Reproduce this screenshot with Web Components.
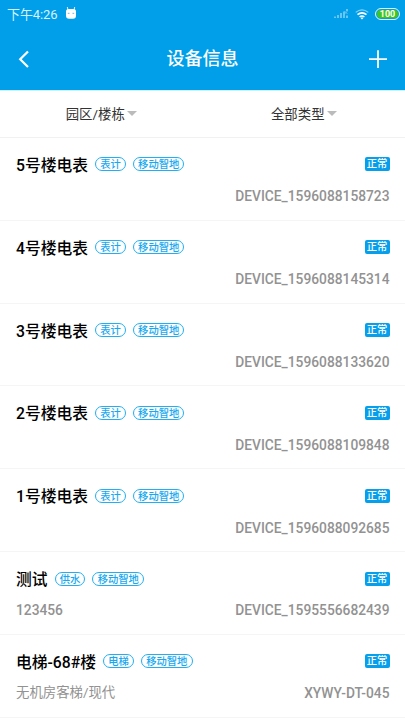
<!DOCTYPE html>
<html lang="zh-CN">
<head>
<meta charset="utf-8">
<title>设备信息</title>
<style>
html,body{margin:0;height:100%;overflow:hidden;background:#fff}
body{font-family:Roboto,"Noto Sans CJK SC",sans-serif;color:#111}
</style>
</head>
<body>
<device-app></device-app>
<script>
const define = (name, html, setup) => {
  customElements.define(name, class extends HTMLElement {
    constructor() {
      super();
      this.attachShadow({mode: 'open'}).innerHTML = html;
    }
    connectedCallback() { if (setup) setup(this, this.shadowRoot); }
  });
};

define('status-bar', `
<style>
:host{display:flex;align-items:center;height:28px;padding:0 6px 0 7px;color:#d9f2ff;font-size:13px;line-height:28px;box-sizing:border-box}
.time{letter-spacing:-.1px;padding-top:1px}
.face{margin-left:8px;margin-top:-3px}
.signal{margin-left:auto;margin-top:-1px}
.wifi{margin-left:6px}
.battery{box-sizing:border-box;width:25px;height:12px;margin-left:6px;margin-right:-1px;border:1px solid #e4fbe9;border-radius:6px;padding:1px;display:flex}
.battery span{flex:1;background:#3fc51c;border-radius:4px;color:#fff;font-size:9px;font-weight:700;line-height:8.5px;text-align:center}
svg{display:block}
</style>
<span class="time">下午4:26</span>
<svg class="face" width="12" height="14" viewBox="0 0 12 14"><path d="M3 4 2.3 1M9 4 9.7 1" stroke="#d9f2ff" stroke-width="1"/><path d="M1 5.5Q1 3 3.5 3h5Q11 3 11 5.5v4.2q0 3-3 3H4q-3 0-3-3Z" fill="#fff"/><path d="M2.8 7.3h1.7M7.5 7.3h1.7" stroke="#5fb9e6" stroke-width="1"/></svg>
<svg class="signal" width="15" height="11" viewBox="0 0 15 11"><path d="M1 10V8.5M4 10V7M7 10V5M10 10V3.5M13 10V7.5M13 3V1" stroke="#72caf6" stroke-width="1.8"/><path d="m10.5 3 3 3m0-3-3 3" stroke="#72caf6" stroke-width=".8"/></svg>
<svg class="wifi" width="14" height="11" viewBox="0 0 14 11" fill="none"><path d="M.7 3.4Q7-1.7 13.3 3.4" stroke="#82d3fa" stroke-width="1.2"/><path d="M2.5 5.7Q7 2 11.5 5.7M4.6 8Q7 6 9.4 8" stroke="#fff" stroke-width="1.6"/><path d="m5.6 9 1.4-.8 1.4.8L7 10.5Z" fill="#fff"/></svg>
<div class="battery"><span>100</span></div>`);

define('nav-bar', `
<style>
:host{display:grid;grid-template-columns:1fr auto 1fr;align-items:center;height:62px;padding:0 18px;box-sizing:border-box;color:#fff}
h1{margin:0;font-size:18px;line-height:24px;font-weight:500}
svg{display:block}
.add{justify-self:end}
</style>
<svg width="12" height="18" viewBox="0 0 12 18"><path d="M10 1.5 2.2 9.3 10 17" fill="none" stroke="#fff" stroke-width="2.2"/></svg>
<h1><slot></slot></h1>
<svg class="add" width="18" height="18" viewBox="0 0 18 18"><path d="M9 .3v17.6M0 9.2h18" stroke="#fff" stroke-width="1.8"/></svg>`);

define('filter-item', `
<style>
:host{flex:1;display:flex;align-items:center;justify-content:center;gap:2px;font-size:13.4px;line-height:20px;color:#333}
span{padding-top:2px}
i{width:0;border:5.3px solid transparent;border-top:5.5px solid #bbb;border-bottom:0}
</style>
<span><slot></slot></span><i></i>`);

define('filter-bar', `
<style>:host{display:flex;box-sizing:border-box;height:47.8px;border-top:1px solid #c9f4fa;border-bottom:1px solid #f1f1f1}</style>
<slot></slot>`);

define('pill-tag', `
<style>:host{box-sizing:border-box;height:14px;border:1px solid #22aef2;border-radius:7px;padding:0 4.2px;color:#16a8f0;font-size:10.3px;font-weight:500;line-height:13px;white-space:nowrap}</style>
<slot></slot>`);

define('status-badge', `
<style>:host{box-sizing:border-box;height:14px;width:25px;text-align:center;border-radius:2px;background:#069fec;color:#fff;font-size:10.3px;font-weight:500;line-height:14px;white-space:nowrap}</style>
<slot></slot>`);

define('device-row', `
<style>
:host{display:flex;flex-direction:column;box-sizing:border-box;height:82.86px;padding:16px 15.5px 0 16px;border-bottom:1px solid #f5f5f5}
div{display:flex;align-items:center}
.head{height:21px;gap:7px}
.name{font-size:15.75px;font-weight:500;line-height:21px;color:#000;white-space:nowrap;padding-top:2px}
status-badge{margin-left:auto}
.meta{justify-content:space-between;height:20px;margin-top:11.4px;font-size:13.77px;font-weight:500;line-height:20px;color:#929292}
.note.cjk{font-size:13.4px;font-weight:400}
</style>
<div class="head"><span class="name"></span><pill-tag class="kind"></pill-tag><pill-tag class="site">移动智地</pill-tag><status-badge>正常</status-badge></div>
<div class="meta"><span class="note"></span><span class="code"></span></div>`,
(host, root) => {
  for (const k of ['name', 'kind', 'note', 'code'])
    root.querySelector('.' + k).textContent = host.getAttribute(k) || '';
  root.querySelector('.note').classList.toggle('cjk', /[^\x00-\x7f]/.test(host.getAttribute('note') || ''));
});

define('device-app', `
<style>
:host{display:flex;flex-direction:column;height:720px;overflow:hidden}
header{background:#019fe9;height:90px}
</style>
<header><status-bar></status-bar><nav-bar>设备信息</nav-bar></header>
<filter-bar><filter-item>园区/楼栋</filter-item><filter-item>全部类型</filter-item></filter-bar>
<main>
<device-row name="5号楼电表" kind="表计" code="DEVICE_1596088158723"></device-row>
<device-row name="4号楼电表" kind="表计" code="DEVICE_1596088145314"></device-row>
<device-row name="3号楼电表" kind="表计" code="DEVICE_1596088133620"></device-row>
<device-row name="2号楼电表" kind="表计" code="DEVICE_1596088109848"></device-row>
<device-row name="1号楼电表" kind="表计" code="DEVICE_1596088092685"></device-row>
<device-row name="测试" kind="供水" note="123456" code="DEVICE_1595556682439"></device-row>
<device-row name="电梯-68#楼" kind="电梯" note="无机房客梯/现代" code="XYWY-DT-045"></device-row>
</main>`);
</script>
</body>
</html>
